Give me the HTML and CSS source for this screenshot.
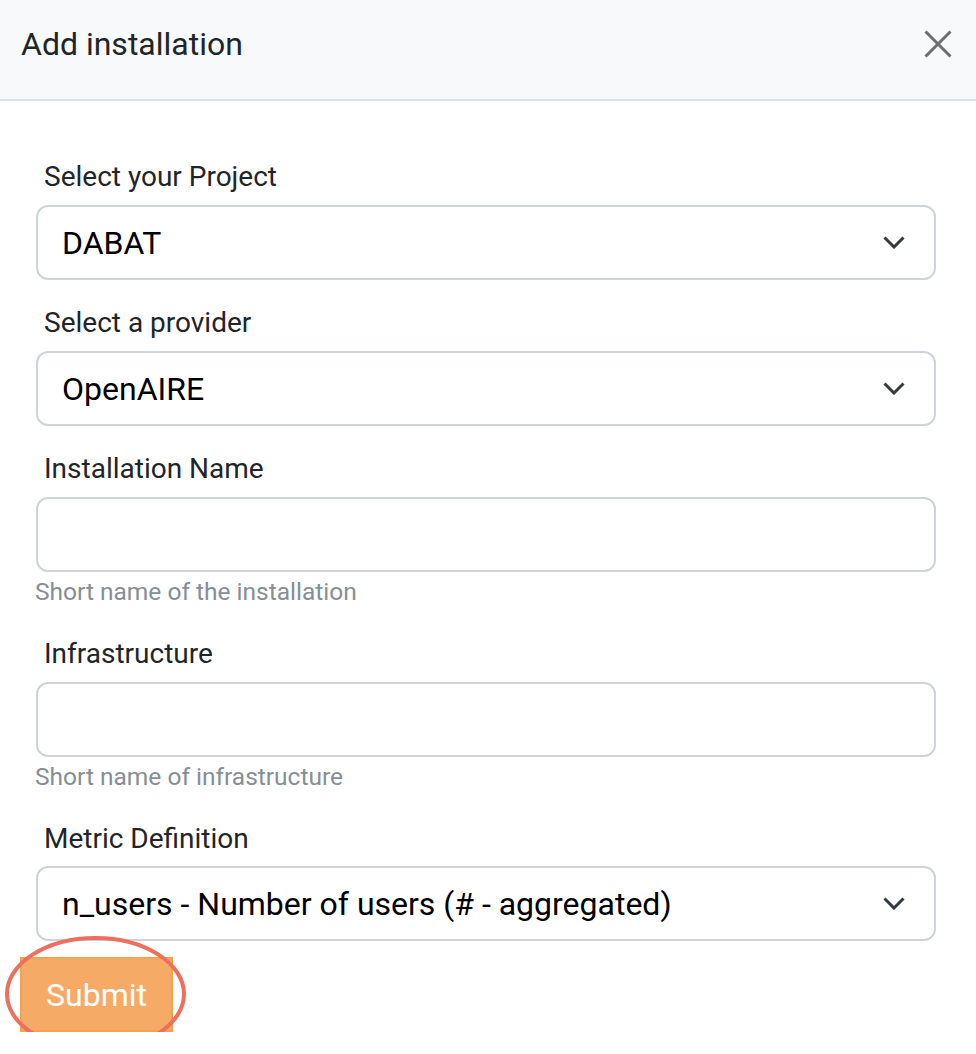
FILE: index.html
```html
<!DOCTYPE html>
<html lang="en">
<head>
<meta charset="utf-8">
<title>Add installation</title>
<link rel="stylesheet" href="styles.css">
</head>
<body>
<div class="modal">
  <div class="modal-header">
    <h5 class="modal-title">Add installation</h5>
    <button class="close" type="button" aria-label="Close">
      <svg width="28" height="28" viewBox="0 0 28 28"><path d="M1.5 1.5 L26.5 26.5 M26.5 1.5 L1.5 26.5" stroke="#6e6e6e" stroke-width="3" fill="none"/></svg>
    </button>
  </div>
  <form class="modal-body">
    <div class="group">
      <label class="label">Select your Project</label>
      <div class="select"><span>DABAT</span><svg class="chev" width="22" height="13" viewBox="0 0 22 13"><path d="M1.5 1.5 L11 11 L20.5 1.5" stroke="#343a40" stroke-width="3" fill="none"/></svg></div>
    </div>
    <div class="group">
      <label class="label">Select a provider</label>
      <div class="select"><span>OpenAIRE</span><svg class="chev" width="22" height="13" viewBox="0 0 22 13"><path d="M1.5 1.5 L11 11 L20.5 1.5" stroke="#343a40" stroke-width="3" fill="none"/></svg></div>
    </div>
    <div class="group with-help">
      <label class="label">Installation Name</label>
      <input class="input" type="text">
      <div class="help">Short name of the installation</div>
    </div>
    <div class="group with-help">
      <label class="label">Infrastructure</label>
      <input class="input" type="text">
      <div class="help">Short name of infrastructure</div>
    </div>
    <div class="group last">
      <label class="label">Metric Definition</label>
      <div class="select"><span>n_users - Number of users (# - aggregated)</span><svg class="chev" width="22" height="13" viewBox="0 0 22 13"><path d="M1.5 1.5 L11 11 L20.5 1.5" stroke="#343a40" stroke-width="3" fill="none"/></svg></div>
    </div>
    <div class="submit-wrap">
      <button class="submit" type="button">Submit</button>
      <svg class="ring" width="181" height="116" viewBox="0 0 181 116"><ellipse cx="90.5" cy="58" rx="88.5" ry="56" fill="none" stroke="#ee6f5c" stroke-width="4"/></svg>
    </div>
  </form>
</div>
</body>
</html>
```

FILE: styles.css
```css
html, body {
  margin: 0;
  padding: 0;
  background: #ffffff;
}
body {
  font-family: Roboto, "Liberation Sans", Arial, sans-serif;
  color: #212529;
}
.modal {
  width: 976px;
}
.modal-header {
  display: flex;
  justify-content: space-between;
  align-items: flex-start;
  background: #f8f9fb;
  border-bottom: 2px solid #dee2e6;
  height: 99px;
  box-sizing: content-box;
  padding: 0 24px 0 21px;
}
.modal-title {
  margin: 20px 0 0 0;
  font-size: 32px;
  line-height: 48px;
  font-weight: 400;
  color: #212529;
}
.close {
  margin-top: 30px;
  padding: 0;
  border: 0;
  background: none;
  width: 28px;
  height: 28px;
  display: block;
}
.close svg {
  display: block;
}
.modal-body {
  display: flex;
  flex-direction: column;
  padding: 55px 40px 0 36px;
}
.group {
  display: flex;
  flex-direction: column;
  margin-bottom: 22px;
}
.group.with-help {
  margin-bottom: 23px;
}
.group.last {
  margin-bottom: 16px;
}
.label {
  font-size: 28px;
  line-height: 42px;
  margin: 0 0 7px 8px;
  color: #212529;
}
.with-help + .last .label {
  margin-bottom: 6px;
}
.select, .input {
  box-sizing: border-box;
  width: 900px;
  height: 75px;
  border: 2px solid #ced4da;
  border-radius: 12px;
  background: #ffffff;
  font-family: inherit;
  font-size: 32px;
  color: #000000;
  margin: 0;
}
.select {
  display: flex;
  align-items: center;
  justify-content: space-between;
  padding: 0 29px 0 24px;
}
.chev {
  display: block;
}
.input {
  padding: 0 24px;
  outline: none;
}
.help {
  margin-top: 2px;
  font-size: 24.5px;
  line-height: 36px;
  color: #868e96;
  margin-left: -1px;
}
.submit-wrap {
  position: relative;
  align-self: flex-start;
  margin-left: -16px;
}
.submit {
  display: block;
  box-sizing: border-box;
  height: 75px;
  width: 153px;
  padding: 0;
  border: 2px solid #f3a253;
  background: #f5ab66;
  color: #ffffff;
  font-family: inherit;
  font-size: 32px;
  line-height: 48px;
  border-radius: 0;
}
.ring {
  position: absolute;
  left: -15px;
  top: -21px;
  pointer-events: none;
}
```
